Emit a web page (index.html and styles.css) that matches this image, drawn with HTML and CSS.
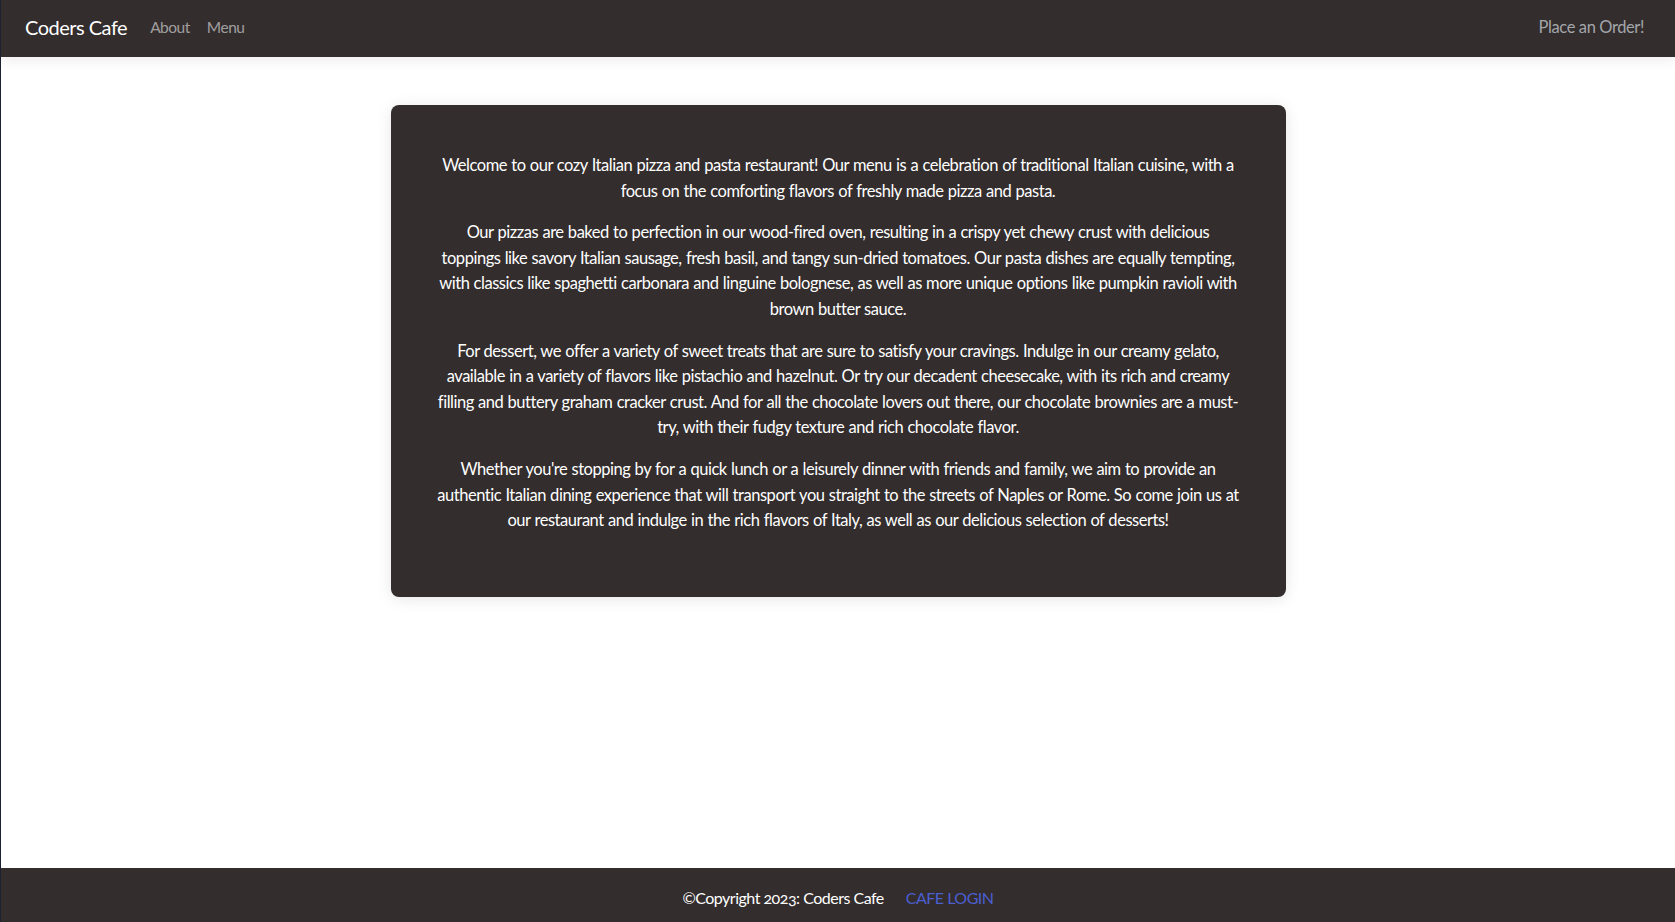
FILE: index.html
```html
<!DOCTYPE html>
<html lang="en">
<head>
<meta charset="utf-8">
<title>Coders Cafe</title>
<link rel="stylesheet" href="styles.css">
</head>
<body>
<div class="page">
  <nav class="navbar">
    <div class="nav-left">
      <a class="brand" href="#">Coders Cafe</a>
      <a class="nav-link" href="#">About</a>
      <a class="nav-link" href="#">Menu</a>
    </div>
    <a class="nav-link order" href="#">Place an Order!</a>
  </nav>
  <main class="main">
    <section class="card">
      <p>Welcome to our cozy Italian pizza and pasta restaurant! Our menu is a celebration of traditional Italian cuisine, with a focus on the comforting flavors of freshly made pizza and pasta.</p>
      <p>Our pizzas are baked to perfection in our wood-fired oven, resulting in a crispy yet chewy crust with delicious toppings like savory Italian sausage, fresh basil, and tangy sun-dried tomatoes. Our pasta dishes are equally tempting, with classics like spaghetti carbonara and linguine bolognese, as well as more unique options like pumpkin ravioli with brown butter sauce.</p>
      <p>For dessert, we offer a variety of sweet treats that are sure to satisfy your cravings. Indulge in our creamy gelato, available in a variety of flavors like pistachio and hazelnut. Or try our decadent cheesecake, with its rich and creamy filling and buttery graham cracker crust. And for all the chocolate lovers out there, our chocolate brownies are a must-try, with their fudgy texture and rich chocolate flavor.</p>
      <p>Whether you're stopping by for a quick lunch or a leisurely dinner with friends and family, we aim to provide an authentic Italian dining experience that will transport you straight to the streets of Naples or Rome. So come join us at our restaurant and indulge in the rich flavors of Italy, as well as our delicious selection of desserts!</p>
    </section>
  </main>
  <footer class="footer">
    <span class="copy">©Copyright 2023: Coders Cafe</span>
    <a class="login" href="#">CAFE LOGIN</a>
  </footer>
</div>
</body>
</html>
```

FILE: styles.css
```css
* { box-sizing: border-box; }
html, body { margin: 0; padding: 0; }
body {
  font-family: Lato, "Liberation Sans", sans-serif;
  background: #ffffff;
  color: #fff;
}
a { text-decoration: none; }
.page {
  min-height: 100vh;
  display: flex;
  flex-direction: column;
  border-left: 1px solid #1d2233;
}
.navbar {
  height: 57px;
  background: #332d2d;
  display: flex;
  align-items: center;
  justify-content: space-between;
  padding: 0 31px 4px 24px;
  box-shadow: 0 4px 12px rgba(0,0,0,0.07);
  position: relative;
  z-index: 2;
}
.nav-left {
  display: flex;
  align-items: center;
}
.brand {
  color: #fff;
  font-size: 20px;
  letter-spacing: -0.5px;
  margin-right: 23px;
}
.nav-link {
  color: rgba(255,255,255,0.55);
  font-size: 15.5px;
  letter-spacing: -0.5px;
  margin-right: 17px;
}
.nav-link.order {
  margin-right: 0;
  font-size: 16.5px;
  letter-spacing: -0.4px;
  color: #a3a6aa;
}
.main {
  flex: 1;
  display: flex;
  justify-content: center;
  padding-top: 48px;
}
.card {
  width: 895px;
  height: 492px;
  background: #332d2d;
  border-radius: 8px;
  padding: 48px 46px;
  box-shadow: 0 2px 15px rgba(0,0,0,0.1);
  text-align: center;
}
.card p {
  margin: 0 0 16px;
  font-size: 16.5px;
  line-height: 25.6px;
  letter-spacing: -0.47px;
  word-spacing: 0.5px;
}
.footer {
  height: 54px;
  background: #332d2d;
  display: flex;
  align-items: center;
  justify-content: center;
  gap: 22px;
  padding-top: 4px;
  font-size: 16px;
  letter-spacing: -0.5px;
  font-variant-numeric: oldstyle-nums;
}
.copy { color: #fff; }
.login { color: #4b5fd1; }
```
